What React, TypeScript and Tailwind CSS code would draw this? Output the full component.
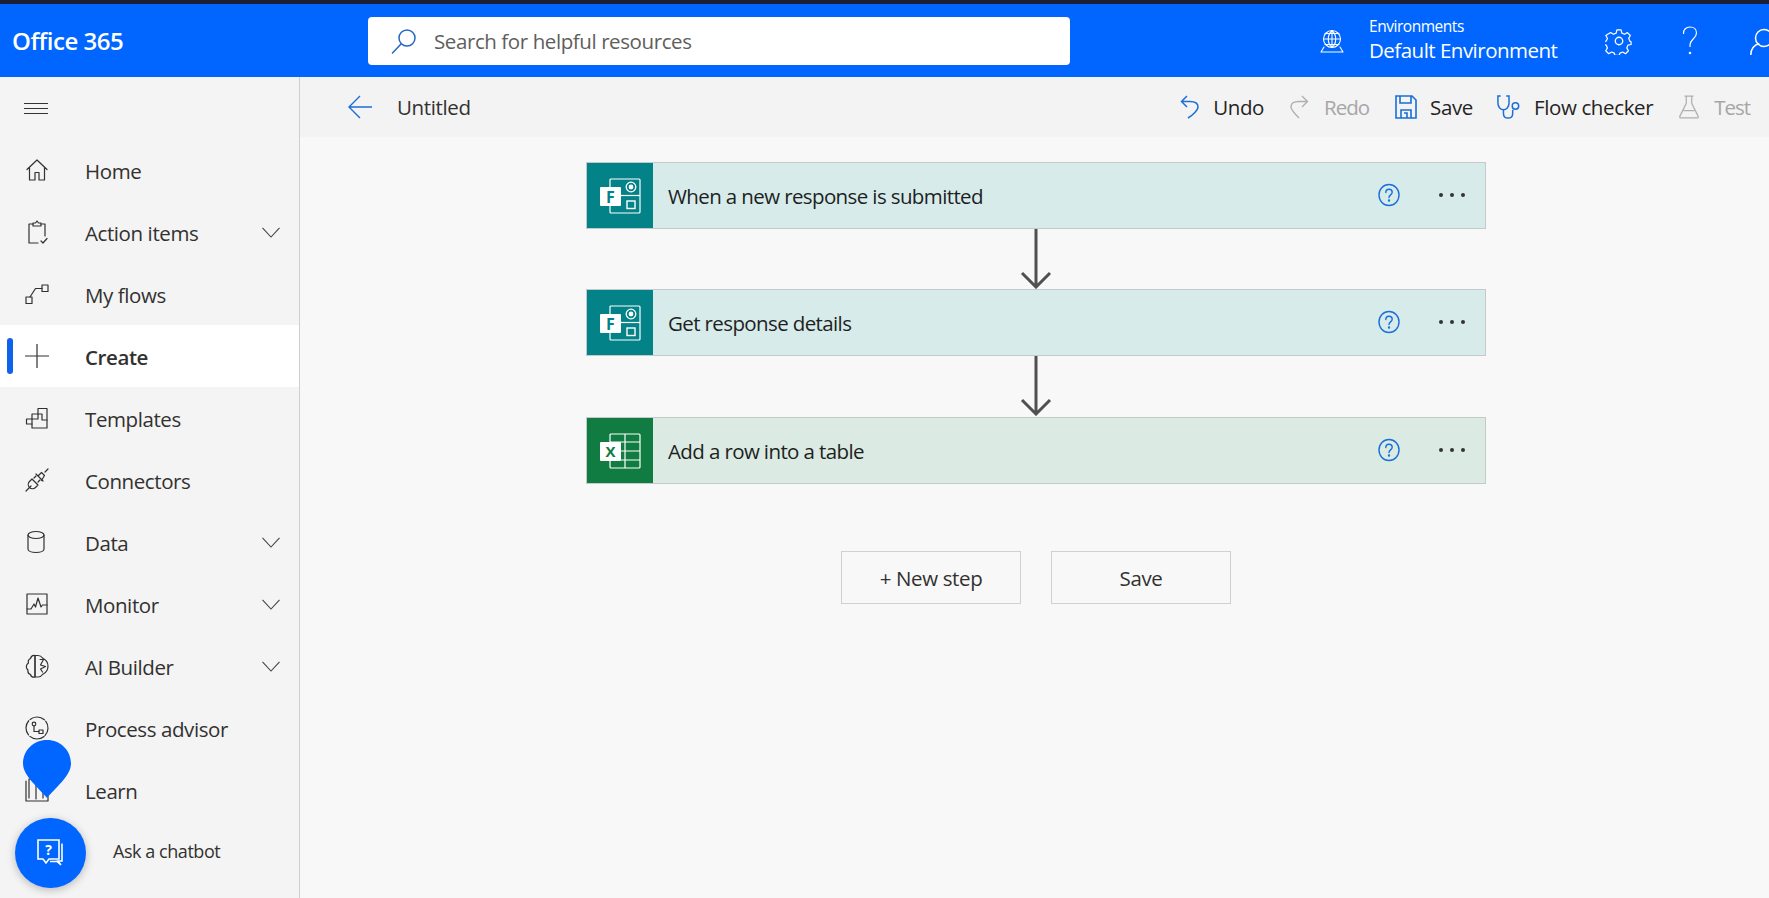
import { ReactNode } from "react";

const Icon = ({ children, className = "h-6 w-6", vb = "0 0 24 24", sw = 1.2 }: { children: ReactNode; className?: string; vb?: string; sw?: number }) => (
  <svg viewBox={vb} className={className} fill="none" stroke="currentColor" strokeWidth={sw} strokeLinecap="round" strokeLinejoin="round">
    {children}
  </svg>
);

const Chevron = () => (
  <svg viewBox="0 0 18 11" className="h-[11px] w-[18px] text-[#444]" fill="none" stroke="currentColor" strokeWidth="1.1">
    <path d="M0.5 0.8 9 10 17.5 0.8" />
  </svg>
);

const navItems: { label: string; icon: ReactNode; chevron?: boolean; active?: boolean }[] = [
  { label: "Home", icon: <path d="M2 11.5 12 2l10 9.5M4.5 9.5V22h5.5v-7.5h4V22h5.5V9.5" /> },
  { label: "Action items", chevron: true, icon: <><path d="M8 4H4v19h9M20 4h-4M20 4v12" /><path d="M8 6V3h2.5l1.5-2 1.5 2H16v3z" /><path d="m16 21 2 2 4-4.5" /></> },
  { label: "My flows", icon: <><rect x="1" y="15" width="6" height="6.5" /><rect x="17" y="3" width="6" height="6.5" /><path d="M5 15 10.5 6.5H17" /></> },
  { label: "Create", active: true, icon: <path d="M12 0v24M0 12h24" /> },
  { label: "Templates", icon: <><path d="M1.5 13H7V8h6V2.500h9V22H7v-4H1.5z" /><path d="M13 8h4v6h5M7 13v5M7 13h6V8" /></> },
  { label: "Connectors", icon: <><path d="m1 23 5-5M23 1l-3 3" /><path d="m7 11 6 6-2.500 2.500a4 4 0 0 1-6-6zM13.500 7.500l3-3 3 3-3 5M11 6l7 7" /><path d="m9 10 2-2M13 14l2-2" /></> },
  { label: "Data", chevron: true, icon: <><ellipse cx="11" cy="5" rx="8" ry="3.5" /><path d="M3 5v14c0 2 3.500 3.500 8 3.500s8-1.500 8-3.500V5" /></> },
  { label: "Monitor", chevron: true, icon: <><rect x="2" y="2" width="20" height="20" /><path d="M2 17h4l3-5 1.500 3L13 6l3 9 1.500-2H22" /></> },
  { label: "AI Builder", chevron: true, icon: <><path d="M10 1.500C7.500 1 6 2.500 5.500 4.500 3 5.500 3 8 3.500 9 1 10.500 .5 14 3 16c-.5 2.500 1 4 2.500 4.500.5 2 2.500 3 4.500 2.500z" /><path d="M10 1.500h3c2 0 3.500 1 4.500 2.500 3 1.500 5.500 4.500 5.500 8s-2.500 7-5.500 8.500c-1 1.500-2.500 2.500-4.500 2.500h-3z" /><path d="M15 5.500h3.500l-3 5.500 5 1.500-5 2.500 2 3" /></> },
  { label: "Process advisor", icon: <><circle cx="12" cy="12" r="11" strokeDasharray="15.3 2" transform="rotate(50 12 12)" /><circle cx="9" cy="8" r="1.8" /><rect x="14" y="14" width="4" height="3.5" /><path d="M9 10v5.500h5" /></> },
  { label: "Learn", icon: <><path d="M1 3v20h22V3" /><path d="M4 20V1h7v20M11 21V3h7v17" /></> },
];

const FormsLogo = () => (
  <svg viewBox="0 0 41 36" className="h-9 w-[41px]" fill="none" stroke="white" strokeWidth="1.2">
    <rect x="10" y="1" width="30" height="34" rx="1" />
    <circle cx="31" cy="9" r="4.8" strokeWidth="1.3" />
    <circle cx="31" cy="9" r="1.8" fill="white" />
    <rect x="27" y="23" width="8" height="7.5" strokeWidth="1.4" />
    <path d="M21 17.5h19" />
    <rect x="0" y="9" width="21" height="19" rx="1" fill="white" stroke="none" />
    <text x="10.5" y="24.5" textAnchor="middle" fill="#038387" stroke="none" fontSize="16" fontWeight="700" fontFamily="'Open Sans', sans-serif">F</text>
  </svg>
);

const ExcelLogo = () => (
  <svg viewBox="0 0 41 36" className="h-9 w-[41px]" fill="none" stroke="white" strokeWidth="1.2">
    <rect x="10" y="1" width="30" height="34" rx="1" />
    <path d="M25 1v34M10 9h30M21 18h19M21 27h19" />
    <rect x="0" y="9" width="21" height="19" rx="1" fill="white" stroke="none" />
    <text x="10.5" y="24" textAnchor="middle" fill="#107c41" stroke="none" fontSize="15" fontWeight="700" fontFamily="'Open Sans', sans-serif">X</text>
  </svg>
);

const HelpCircle = () => (
  <svg viewBox="0 0 22 24" className="h-6 w-[22px] text-[#1a6fd8]" fill="none" stroke="currentColor" strokeWidth="1.4" strokeLinecap="round">
    <ellipse cx="11" cy="12" rx="10" ry="10.5" />
    <path d="M7.800 9.500C7.800 7.500 9.200 6.300 11 6.300s3.200 1.200 3.200 3c0 2.500-3.200 2.700-3.200 5.200" />
    <circle cx="11" cy="17.5" r=".5" fill="currentColor" />
  </svg>
);

const Step = ({ title, excel }: { title: string; excel?: boolean }) => (
  <div className={`flex h-[67px] w-[900px] items-stretch border border-[#c4cacb] ${excel ? "bg-[#dbeae2]" : "bg-[#d8ebeb]"}`}>
    <div className={`flex w-[66px] items-center justify-center ${excel ? "bg-[#107c41]" : "bg-[#038387]"}`}>
      {excel ? <ExcelLogo /> : <FormsLogo />}
    </div>
    <div className="flex-1 pl-[15px] pt-[1px] text-[20.5px] leading-[65px] tracking-[-0.03em] text-[#201f1e]">{title}</div>
    <div className="mr-[20px] flex items-center gap-[39px] pb-[2px]">
      <HelpCircle />
      <div className="flex gap-[7px]">
        <span className="h-[4px] w-[4px] rounded-full bg-[#333]" />
        <span className="h-[4px] w-[4px] rounded-full bg-[#333]" />
        <span className="h-[4px] w-[4px] rounded-full bg-[#333]" />
      </div>
    </div>
  </div>
);

const Arrow = ({ tall }: { tall?: boolean }) => (
  <div className={`flex w-[900px] justify-center ${tall ? "h-[61px]" : "h-[60px]"}`}>
    <svg viewBox="0 0 32 60" className="h-[60px] w-8 text-[#505050]" fill="none" stroke="currentColor" strokeWidth="3">
      <path d="M16 0v58M2 44l14 14 14-14" />
    </svg>
  </div>
);

const ToolButton = ({ label, icon, disabled, className = "" }: { label: string; icon: ReactNode; disabled?: boolean; className?: string }) => (
  <div className={`flex items-center ${disabled ? "gap-[15px] text-[#b0b0b0]" : "gap-[13px] text-[#1a6fd8]"} ${className}`}>
    {icon}
    <span className={`pt-[1px] text-[20.5px] ${disabled ? "tracking-[-0.05em] text-[#a6a6a6]" : "tracking-[-0.018em] text-[#252423]"}`}>{label}</span>
  </div>
);

export default function App() {
  return (
    <div className="flex h-[898px] w-[1769px] flex-col overflow-hidden bg-[#f8f8f8] font-['Open_Sans',sans-serif]">
      <div className="h-[4px] shrink-0 bg-[#1c2036]" />
      <header className="flex h-[73px] shrink-0 items-center whitespace-nowrap bg-[#0066ff] text-white">
        <div className="w-[368px] shrink-0 pl-3 text-[24px] font-semibold tracking-[-0.02em]">Office 365</div>
        <div className="flex h-[48px] w-[702px] shrink-0 items-center rounded-[4px] bg-white pl-[23px]">
          <svg viewBox="0 0 26 26" className="h-[26px] w-[26px] text-[#2566c8]" fill="none" stroke="currentColor" strokeWidth="1.5">
            <circle cx="16" cy="10" r="8" />
            <path d="M10 16 1.500 25" strokeLinecap="round" />
          </svg>
          <span className="ml-[17px] pt-[2px] text-[20.5px] tracking-[-0.02em] text-[#605e5c]">Search for helpful resources</span>
        </div>
        <div className="ml-[250px] flex shrink-0 items-center">
          <Icon className="h-6 w-6" sw={1.1}>
            <circle cx="12" cy="10" r="8.5" />
            <path d="M3.500 10h17M12 1.500v17M12 1.500c-5 4.500-5 12.500 0 17M12 1.500c5 4.500 5 12.500 0 17M5 4.500h14M5 15.500h14M4 18 1 23h22l-3-5" />
          </Icon>
          <div className="ml-[25px] flex w-[190px] flex-col pb-[3px]">
            <span className="text-[15.5px] leading-[22px] tracking-[-0.03em]">Environments</span>
            <span className="text-[20.5px] leading-[26px] tracking-[-0.025em]">Default Environment</span>
          </div>
          <svg viewBox="0 0 24 24" className="ml-[46px] h-[28px] w-[28px]" fill="none" stroke="currentColor" strokeWidth="1.15" strokeLinejoin="round">
            <circle cx="12" cy="12" r="3.2" />
            <path d="M10 1.500h4l.7 3 2.600 1.100 2.700-1.600 2.800 2.800-1.600 2.700 1.100 2.600 0 0 1.200.6v2.600l-3 .7-1.100 2.600 1.600 2.700-2.800 2.800-2.700-1.600-2.600 1.100-.7 2h-4l-.7-2-2.600-1.100-2.700 1.600-2.800-2.800 1.600-2.700-1.100-2.600-3-.7v-2.600l3-.7 1.100-2.600-1.600-2.700L4 4l2.700 1.600L9.300 4.500z" transform="translate(1.200 1.200) scale(.9)" />
          </svg>
          <svg viewBox="0 0 16 30" className="ml-[49px] h-[30px] w-4" fill="none" stroke="currentColor" strokeWidth="1.2" strokeLinecap="round">
            <path d="M1.500 7.500C1.500 3.500 4 1 8 1s6.500 2.500 6.500 6c0 5.500-6.500 6-6.500 12v1.500" />
            <circle cx="8" cy="27" r=".7" fill="currentColor" />
          </svg>
          <svg viewBox="0 0 30 30" className="ml-[52px] h-[30px] w-[30px] shrink-0" fill="none" stroke="currentColor" strokeWidth="1.5">
            <circle cx="14" cy="12" r="8.5" />
            <path d="M.8 29c0-6 3.500-10 8.500-11.500" />
          </svg>
        </div>
      </header>

      <div className="flex flex-1 overflow-hidden">
        <aside className="relative w-[300px] shrink-0 border-r border-[#cfcfcf] bg-[#f4f4f4]">
          <div className="flex h-[62px] items-center pl-[24px]">
            <div className="flex w-6 flex-col gap-[4px]">
              <div className="h-[1px] bg-[#333]" />
              <div className="h-[1px] bg-[#333]" />
              <div className="h-[1px] bg-[#333]" />
            </div>
          </div>
          {navItems.map((item) => (
            <div
              key={item.label}
              className={`relative flex h-[62px] items-center pl-[25px] pr-[19px] text-[#323130] ${item.active ? "bg-white" : ""}`}
            >
              {item.active && <span className="absolute left-[7px] top-[13px] h-[36px] w-[6px] rounded-full bg-[#0f62ea]" />}
              <Icon>{item.icon}</Icon>
              <span className={`ml-[36px] flex-1 pt-[2px] text-[20.5px] tracking-[-0.02em] ${item.active ? "font-semibold" : ""}`}>{item.label}</span>
              {item.chevron && <Chevron />}
            </div>
          ))}
          <div className="-mt-[3px] flex items-center pl-[15px]">
            <div className="flex h-[70px] w-[71px] items-center justify-center rounded-full bg-[#0066ff] text-white shadow-[0_2px_8px_rgba(0,0,0,0.25)]">
              <svg viewBox="0 0 28 30" className="h-[30px] w-[28px]" fill="none" stroke="currentColor" strokeWidth="1.6">
                <path d="M1 2h21v19H12l-3 4-3-4H1zM25 5.500V23h-3l-1 0 3 4-4-3.500h-7" />
                <text x="11.5" y="16.5" textAnchor="middle" fill="currentColor" stroke="none" fontSize="14" fontWeight="700" fontFamily="'Open Sans', sans-serif">?</text>
              </svg>
            </div>
            <span className="ml-[27px] pb-[4px] text-[18px] tracking-[-0.025em] text-[#323130]">Ask a chatbot</span>
          </div>
          <div className="absolute left-[23px] top-[663px] text-[#0066ff]">
            <svg viewBox="0 0 48 58" className="h-[58px] w-[48px]" fill="currentColor">
              <path d="M24 58C16 48 0 36 0 23.500 0 10.500 10.500 0 24 0s24 10.500 24 23.500C48 36 32 48 24 58z" />
            </svg>
          </div>
        </aside>

        <main className="flex-1">
          <div className="flex h-[60px] items-center bg-[#f3f3f3] pl-[48px] pr-[19px]">
            <svg viewBox="0 0 24 24" className="h-6 w-6 text-[#1a6fd8]" fill="none" stroke="currentColor" strokeWidth="1.4">
              <path d="M24 12H1M12 1 1 12l11 11" />
            </svg>
            <span className="ml-[25px] pt-[1px] text-[20.5px] tracking-[-0.018em] text-[#323130]">Untitled</span>
            <div className="ml-auto flex items-center">
              <ToolButton
                label="Undo"
                icon={<svg viewBox="0 0 20 24" className="h-6 w-5" fill="none" stroke="currentColor" strokeWidth="1.5"><path d="M7 1 1.500 6.500 7 12M1.500 6.500H10c5 0 8 1.500 8 5.500 0 3-5 8-10 11" /></svg>}
              />
              <ToolButton
                disabled
                className="ml-[25px]"
                label="Redo"
                icon={<svg viewBox="0 0 20 24" className="h-6 w-5" fill="none" stroke="currentColor" strokeWidth="1.4"><path d="M13 1l5.500 5.500L13 12M18.500 6.500H10C5 6.500 2 8 2 12c0 3 5 8 8 11" /></svg>}
              />
              <ToolButton
                className="ml-[26px]"
                label="Save"
                icon={<svg viewBox="0 0 22 24" className="h-6 w-[22px]" fill="none" stroke="currentColor" strokeWidth="1.6"><path d="M1 1h16l4 4v18H1zM5 1v7h11V1M6 23v-8h10v8" /><path d="M9 18h3v5" /></svg>}
              />
              <ToolButton
                className="ml-[24px]"
                label="Flow checker"
                icon={<svg viewBox="0 0 26 26" className="h-[26px] w-[24px]" fill="none" stroke="currentColor" strokeWidth="1.6"><path d="M4 1H1v8c0 4 3 7 6 7s6-3 6-7V1h-3M7 16v4c0 3 2 5 5 5s5-2 5-5v-4" /><circle cx="20" cy="12" r="3.5" /></svg>}
              />
              <ToolButton
                disabled
                className="ml-[26px]"
                label="Test"
                icon={<svg viewBox="0 0 22 26" className="h-[26px] w-5" fill="none" stroke="currentColor" strokeWidth="1.4"><path d="M6 1h10M8 1v8L1 23c-.5 1 0 2 1 2h18c1 0 1.500-1 1-2L14 9V1M5 17h12" /></svg>}
              />
            </div>
          </div>

          <div className="flex flex-col pl-[286px] pt-[25px]">
            <Step title="When a new response is submitted" />
            <Arrow />
            <Step title="Get response details" />
            <Arrow tall />
            <Step title="Add a row into a table" excel />
            <div className="ml-[255px] mt-[67px] flex gap-[30px]">
              <button className="h-[53px] w-[180px] border border-[#d0d0d0] pt-[1px] text-[20.5px] tracking-[-0.018em] text-[#323130]">+ New step</button>
              <button className="h-[53px] w-[180px] border border-[#d0d0d0] pt-[1px] text-[20.5px] tracking-[-0.018em] text-[#323130]">Save</button>
            </div>
          </div>
        </main>
      </div>
    </div>
  );
}
